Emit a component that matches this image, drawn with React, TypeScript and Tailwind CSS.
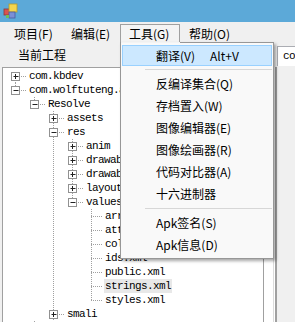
import React from "react";

type Row = {
  t: string;
  l: number;
  box?: "+" | "-";
  last?: boolean;
  first?: boolean;
  anc: boolean[];
  sel?: boolean;
};

const rows: Row[] = [
  { t: "com.kbdev", l: 0, box: "+", first: true, anc: [] },
  { t: "com.wolftuteng.apktool", l: 0, box: "-", last: true, anc: [] },
  { t: "Resolve", l: 1, box: "-", last: true, anc: [false] },
  { t: "assets", l: 2, box: "+", anc: [false, false] },
  { t: "res", l: 2, box: "-", anc: [false, false] },
  { t: "anim", l: 3, box: "+", anc: [false, false, true] },
  { t: "drawable", l: 3, box: "+", anc: [false, false, true] },
  { t: "drawable-hdpi", l: 3, box: "+", anc: [false, false, true] },
  { t: "layout", l: 3, box: "+", anc: [false, false, true] },
  { t: "values", l: 3, box: "-", last: true, anc: [false, false, true] },
  { t: "arrays.xml", l: 4, anc: [false, false, true, false] },
  { t: "attrs.xml", l: 4, anc: [false, false, true, false] },
  { t: "colors.xml", l: 4, anc: [false, false, true, false] },
  { t: "ids.xml", l: 4, anc: [false, false, true, false] },
  { t: "public.xml", l: 4, anc: [false, false, true, false] },
  { t: "strings.xml", l: 4, anc: [false, false, true, false], sel: true },
  { t: "styles.xml", l: 4, last: true, anc: [false, false, true, false] },
  { t: "smali", l: 2, box: "+", anc: [false, false] },
];

const LINE = "#a0a0a0";

function Guides({ r }: { r: Row }) {
  const w = 24 + 19 * r.l;
  const cx = 12 + 19 * r.l;
  return (
    <svg width={w} height={14} className="shrink-0">
      {r.anc.map((on, a) =>
        on ? (
          <line key={a} x1={12 + 19 * a + 0.5} y1={0} x2={12 + 19 * a + 0.5} y2={14} stroke={LINE} strokeDasharray="1 1" />
        ) : null
      )}
      <line x1={cx + 0.5} y1={r.first ? 7 : 0} x2={cx + 0.5} y2={r.last ? 8 : 14} stroke={LINE} strokeDasharray="1 1" />
      <line x1={cx} y1={7.5} x2={cx + 11} y2={7.5} stroke={LINE} strokeDasharray="1 1" />
      {r.box && (
        <g>
          <rect x={cx - 3.5} y={3.5} width={8} height={8} fill="#fff" stroke="#919191" />
          <line x1={cx - 1.5} y1={7.5} x2={cx + 3.5} y2={7.5} stroke="#222" />
          {r.box === "+" && <line x1={cx + 0.5} y1={5} x2={cx + 0.5} y2={10} stroke="#222" />}
        </g>
      )}
    </svg>
  );
}

const menuItems = [
  "反编译集合(Q)",
  "存档置入(W)",
  "图像编辑器(E)",
  "图像绘画器(R)",
  "代码对比器(A)",
  "十六进制器",
];

export default function App() {
  return (
    <div className="relative w-[295px] h-[322px] overflow-hidden bg-[#f0f0f0] text-black font-['Noto_Sans_CJK_SC',sans-serif] text-[12px]">
      {/* title bar */}
      <div className="h-[22px] bg-[#5ca9d8] flex items-start pl-[3px] pt-[3px]">
        <svg width="16" height="16" viewBox="0 0 16 16">
          <rect x="1" y="6" width="6" height="6" fill="#d9534f" stroke="#8a3a3a" strokeWidth="0.8" />
          <rect x="6" y="1" width="8" height="8" fill="#f3d54e" stroke="#b59a2a" strokeWidth="0.8" />
          <rect x="6" y="9" width="6" height="6" fill="#7b8fd6" stroke="#4c5aa0" strokeWidth="0.8" />
          <rect x="3" y="12" width="3" height="3" fill="#6fbf5a" />
        </svg>
      </div>

      {/* menu bar */}
      <div className="h-[21px] flex pl-[6px]">
        <div className="w-[57px] h-[19px] mt-[2px] pl-[8px] flex items-center">项目(F)</div>
        <div className="w-[57px] h-[19px] mt-[2px] pl-[8px] flex items-center">编辑(E)</div>
        <div className="w-[60px] h-[19px] mt-[2px] pl-[8px] flex items-center border border-b-0 border-[#a0a0a0] bg-[#f4f4f4]">工具(G)</div>
        <div className="h-[19px] mt-[2px] pl-[9px] flex items-center">帮助(O)</div>
      </div>

      {/* body */}
      <div className="flex h-[279px]">
        <div className="w-[277px] flex flex-col">
          <div className="h-[24px] pl-[18px] flex items-center">当前工程</div>
          <div className="flex flex-1 min-h-0">
            <div className="ml-[2px] w-[262px] bg-white border-l border-t border-r border-[#a0a0a0] pt-px overflow-hidden font-['Liberation_Mono',monospace] text-[11px] tracking-[-0.6px]">
              {rows.map((r) => (
                <div key={r.t} className="h-[14px] flex items-center whitespace-nowrap">
                  <Guides r={r} />
                  <span className={`ml-px px-px leading-[14px] ${r.sel ? "bg-[#e8e8e8]" : ""}`}>{r.t}</span>
                </div>
              ))}
              <div className="h-[14px] flex">
                <svg width="24" height="14" className="ml-[19px] shrink-0">
                  <line x1={31 - 19 + 0.5} y1={0} x2={31 - 19 + 0.5} y2={14} stroke={LINE} strokeDasharray="1 1" />
                </svg>
              </div>
            </div>
            <div className="w-[9px] bg-white border-t border-[#a0a0a0]" />
            <div className="w-[4px] bg-white border-l border-r-2 border-l-[#dcdcdc] border-r-[#a0a0a0]" />
          </div>
        </div>
        <div className="flex-1 min-w-0">
          <div className="mt-[3px] h-[20px] bg-white border-t border-l border-[#abadb3] pl-[5px] flex items-center overflow-hidden whitespace-nowrap font-['Liberation_Mono',monospace] text-[11px] tracking-[-0.6px]">
            com
          </div>
        </div>
      </div>

      {/* dropdown menu */}
      <div className="absolute left-[120px] top-[42px] w-[154px] bg-[#f9f9f9] border border-[#979797] shadow-[2px_2px_3px_rgba(0,0,0,0.35)] pt-px pb-[2px]">
        <div className="absolute left-0 top-[-1px] w-[59px] h-px bg-[#f4f4f4]" />
        <div className="h-[22px] flex items-end">
          <div className="h-[21px] w-full mx-px bg-[#cce8ff] border border-[#99d1ff] pl-[33px] flex items-center">
            <span className="w-[54px]">翻译(V)</span>
            <span>Alt+V</span>
          </div>
        </div>
        <div className="h-[7px] flex items-center pl-[24px] pr-px">
          <div className="h-px w-full bg-[#d7d7d7]" />
        </div>
        {menuItems.map((m) => (
          <div key={m} className="h-[22px] pl-[35px] flex items-center">
            {m}
          </div>
        ))}
        <div className="h-[7px] flex items-center pl-[24px] pr-px">
          <div className="h-px w-full bg-[#d7d7d7]" />
        </div>
        <div className="h-[22px] pl-[35px] flex items-center">Apk签名(S)</div>
        <div className="h-[22px] pl-[35px] flex items-center">Apk信息(D)</div>
      </div>
    </div>
  );
}
